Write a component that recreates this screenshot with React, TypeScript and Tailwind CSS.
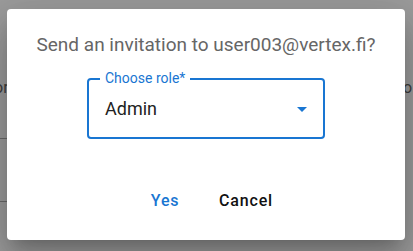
import React from "react";

export default function App() {
  return (
    <div
      className="relative w-[413px] h-[251px] overflow-hidden bg-[#9c9c9c]"
      style={{ fontFamily: "Roboto, 'Liberation Sans', sans-serif" }}
    >
      {/* page content behind the backdrop */}
      <div className="absolute left-[-6px] top-[76px] text-[16px] text-[#3e3e3e]">or</div>
      <div className="absolute left-[403px] top-[76px] text-[16px] text-[#3e3e3e]">o</div>
      <div className="absolute left-0 top-[138px] w-[7px] h-px bg-[#6a6a6a]" />
      <div className="absolute left-0 top-[201px] w-[7px] h-px bg-[#6a6a6a]" />

      <div className="relative pt-[9px] pl-[7px]">
        <div className="w-[398px] h-[231px] bg-white rounded-[4px] shadow-[0_11px_15px_-7px_rgba(0,0,0,0.2),0_24px_38px_3px_rgba(0,0,0,0.14),0_9px_46px_8px_rgba(0,0,0,0.12)] flex flex-col items-center">
          <div className="mt-[22px] text-[19px] leading-[28px] text-[#666666]">
            Send an invitation to user003@vertex.fi?
          </div>
          <div className="relative mt-[19px] w-[238px] h-[61px] rounded-[4px] border-2 border-[#1976d2] flex items-center pl-[16px] pr-[9px]">
            <span className="absolute left-[11px] top-[-10px] bg-white px-[5px] text-[14px] leading-[16px] text-[#1976d2]">
              Choose role*
            </span>
            <span className="flex-1 text-[18px] text-[#222222]">Admin</span>
            <svg width="24" height="24" viewBox="0 0 24 24" className="text-[#1976d2]">
              <path d="M7 10l5 5 5-5z" fill="currentColor" />
            </svg>
          </div>
          <div className="mt-[44px] flex items-center gap-[14px] ml-[2px]">
            <button className="min-w-[64px] px-[8px] py-[6px] text-[16px] font-medium tracking-[0.8px] text-[#1976d2]">
              Yes
            </button>
            <button className="min-w-[64px] px-[8px] py-[6px] text-[16px] font-medium tracking-[0.8px] text-[#111111]">
              Cancel
            </button>
          </div>
        </div>
      </div>
    </div>
  );
}
